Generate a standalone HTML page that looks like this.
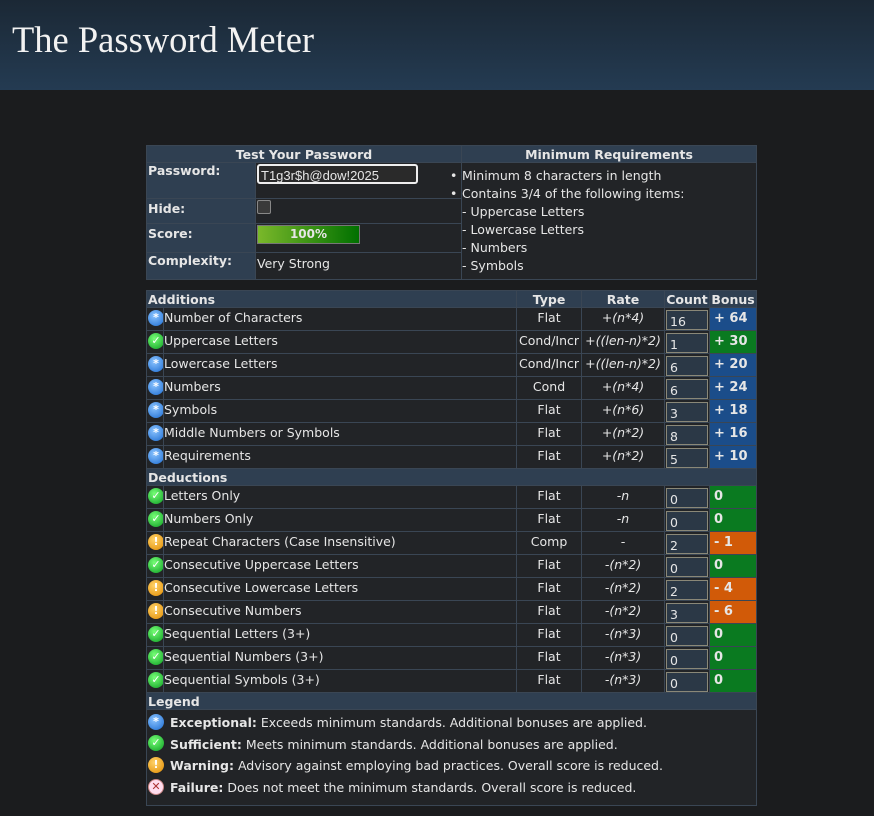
<!DOCTYPE html>
<html><head><meta charset="utf-8"><style>
body{margin:0;background:#1b1c1e;width:874px;height:816px;overflow:hidden;font-family:"DejaVu Sans","Liberation Sans",sans-serif;font-size:12.5px;color:#e6e6e6}
#hdr{height:90px;background:linear-gradient(#1b2835,#243b52);position:relative}
#hdr h1{margin:0;position:absolute;left:12px;top:18px;font-family:"Liberation Serif",serif;font-weight:normal;font-size:36.5px;color:#f2f2f2}
table{border-collapse:collapse;table-layout:fixed;position:absolute;left:146px}
td,th{border:1px solid #3a4654;padding:0 1px;overflow:hidden;white-space:nowrap}
th{background:#2f3f51;font-weight:bold;font-size:12.5px}
td{background:#222427}
.g td{vertical-align:top;padding-top:2px}
.g td.ii{padding:2px 0 0 0}
.g td.ii .ic{display:block;margin:0 0 0 1px}
.g td.nm{padding-left:0}
.lab{background:#2f3f51;font-weight:bold;vertical-align:top}
.c{text-align:center}.i{font-style:italic}
.g td.cnt{padding:2px 0 0 0}
.box{width:42px;height:20px;margin:0 0 0 1px;background:#2b3846;border:1px solid #8a8878;box-sizing:border-box;padding:3px 0 0 3px;font-size:12.5px}
.g td.b{font-weight:bold;font-size:13px;padding:3px 0 0 4px}
.bl{background:#1b4d8a !important}.gr{background:#0a7a20 !important}.or{background:#d15a08 !important}
.ic{display:inline-block;width:16px;height:16px;border-radius:50%;text-align:center;font-size:11px;line-height:16px;color:#fff;font-weight:bold}
.x{background:radial-gradient(circle at 40% 35%,#8bc4ff,#1a6ad0)}
.s{background:radial-gradient(circle at 40% 35%,#7f7,#0a9a20)}
.w{background:radial-gradient(circle at 40% 35%,#ffd36a,#e08a00)}
.f{background:#fde;color:#a33;border:1px solid #c88;box-sizing:border-box;line-height:14px}
.sec th{text-align:left}
.sec th.c{text-align:center}
.lg div{height:21.7px;line-height:21.7px}
.lg .ic{vertical-align:middle;position:relative;top:-2px;margin-right:2px}
</style></head><body>
<div id="hdr"><h1>The Password Meter</h1></div>

<table style="top:145px;width:610px">
<col style="width:109px"><col style="width:206px"><col style="width:295px">
<tr style="height:17px"><th colspan="2">Test Your Password</th><th>Minimum Requirements</th></tr>
<tr style="height:36px"><td class="lab">Password:</td><td style="vertical-align:top;padding-top:1px"><div style="width:161px;height:20px;border:2px solid #eee;border-radius:3px;background:#2a2a2a;box-sizing:border-box;font-family:'Liberation Sans',sans-serif;font-size:13px;padding:2px 0 0 2px">T1g3r$h@dow!2025</div></td>
<td rowspan="4" style="vertical-align:top;padding:4px 0 0 0;line-height:18px;overflow:visible">
<div style="position:relative"><span style="position:absolute;left:-12px">•</span>Minimum 8 characters in length</div>
<div style="position:relative"><span style="position:absolute;left:-12px">•</span>Contains 3/4 of the following items:</div>
<div>- Uppercase Letters</div><div>- Lowercase Letters</div><div>- Numbers</div><div>- Symbols</div></td></tr>
<tr style="height:25px"><td class="lab" style="padding-top:2px">Hide:</td><td style="vertical-align:top"><div style="width:12px;height:12px;border:1px solid #888;border-radius:2px;background:#3a3a3a;margin-top:1px"></div></td></tr>
<tr style="height:29px"><td class="lab" style="padding-top:2px">Score:</td><td style="vertical-align:top"><div style="width:101px;height:17px;border:1px solid #777;background:linear-gradient(90deg,#7ab82a,#007000);text-align:center;font-weight:bold;font-size:12px;line-height:17px;margin-top:1px">100%</div></td></tr>
<tr style="height:27px"><td class="lab">Complexity:</td><td style="vertical-align:top;padding-top:3px">Very Strong</td></tr>
</table>

<table class="g" style="top:290px;width:610px">
<col style="width:17px"><col style="width:353px"><col style="width:65px"><col style="width:83px"><col style="width:45px"><col style="width:47px">
<tr style="height:17px" class="sec"><th colspan="2">Additions</th><th class="c">Type</th><th class="c">Rate</th><th class="c">Count</th><th class="c">Bonus</th></tr>
<tr style="height:23px"><td class="ii"><span class="ic x">*</span></td><td class="nm">Number of Characters</td><td class="c">Flat</td><td class="c i">+(n*4)</td><td class="cnt"><div class="box">16</div></td><td class="b bl">+ 64</td></tr>
<tr style="height:23px"><td class="ii"><span class="ic s">✓</span></td><td class="nm">Uppercase Letters</td><td class="c">Cond/Incr</td><td class="c i">+((len-n)*2)</td><td class="cnt"><div class="box">1</div></td><td class="b gr">+ 30</td></tr>
<tr style="height:23px"><td class="ii"><span class="ic x">*</span></td><td class="nm">Lowercase Letters</td><td class="c">Cond/Incr</td><td class="c i">+((len-n)*2)</td><td class="cnt"><div class="box">6</div></td><td class="b bl">+ 20</td></tr>
<tr style="height:23px"><td class="ii"><span class="ic x">*</span></td><td class="nm">Numbers</td><td class="c">Cond</td><td class="c i">+(n*4)</td><td class="cnt"><div class="box">6</div></td><td class="b bl">+ 24</td></tr>
<tr style="height:23px"><td class="ii"><span class="ic x">*</span></td><td class="nm">Symbols</td><td class="c">Flat</td><td class="c i">+(n*6)</td><td class="cnt"><div class="box">3</div></td><td class="b bl">+ 18</td></tr>
<tr style="height:23px"><td class="ii"><span class="ic x">*</span></td><td class="nm">Middle Numbers or Symbols</td><td class="c">Flat</td><td class="c i">+(n*2)</td><td class="cnt"><div class="box">8</div></td><td class="b bl">+ 16</td></tr>
<tr style="height:23px"><td class="ii"><span class="ic x">*</span></td><td class="nm">Requirements</td><td class="c">Flat</td><td class="c i">+(n*2)</td><td class="cnt"><div class="box">5</div></td><td class="b bl">+ 10</td></tr>
<tr style="height:17px" class="sec"><th colspan="6">Deductions</th></tr>
<tr style="height:23px"><td class="ii"><span class="ic s">✓</span></td><td class="nm">Letters Only</td><td class="c">Flat</td><td class="c i">-n</td><td class="cnt"><div class="box">0</div></td><td class="b gr">0</td></tr>
<tr style="height:23px"><td class="ii"><span class="ic s">✓</span></td><td class="nm">Numbers Only</td><td class="c">Flat</td><td class="c i">-n</td><td class="cnt"><div class="box">0</div></td><td class="b gr">0</td></tr>
<tr style="height:23px"><td class="ii"><span class="ic w">!</span></td><td class="nm">Repeat Characters (Case Insensitive)</td><td class="c">Comp</td><td class="c i">-</td><td class="cnt"><div class="box">2</div></td><td class="b or">- 1</td></tr>
<tr style="height:23px"><td class="ii"><span class="ic s">✓</span></td><td class="nm">Consecutive Uppercase Letters</td><td class="c">Flat</td><td class="c i">-(n*2)</td><td class="cnt"><div class="box">0</div></td><td class="b gr">0</td></tr>
<tr style="height:23px"><td class="ii"><span class="ic w">!</span></td><td class="nm">Consecutive Lowercase Letters</td><td class="c">Flat</td><td class="c i">-(n*2)</td><td class="cnt"><div class="box">2</div></td><td class="b or">- 4</td></tr>
<tr style="height:23px"><td class="ii"><span class="ic w">!</span></td><td class="nm">Consecutive Numbers</td><td class="c">Flat</td><td class="c i">-(n*2)</td><td class="cnt"><div class="box">3</div></td><td class="b or">- 6</td></tr>
<tr style="height:23px"><td class="ii"><span class="ic s">✓</span></td><td class="nm">Sequential Letters (3+)</td><td class="c">Flat</td><td class="c i">-(n*3)</td><td class="cnt"><div class="box">0</div></td><td class="b gr">0</td></tr>
<tr style="height:23px"><td class="ii"><span class="ic s">✓</span></td><td class="nm">Sequential Numbers (3+)</td><td class="c">Flat</td><td class="c i">-(n*3)</td><td class="cnt"><div class="box">0</div></td><td class="b gr">0</td></tr>
<tr style="height:23px"><td class="ii"><span class="ic s">✓</span></td><td class="nm">Sequential Symbols (3+)</td><td class="c">Flat</td><td class="c i">-(n*3)</td><td class="cnt"><div class="box">0</div></td><td class="b gr">0</td></tr>
<tr style="height:17px" class="sec"><th colspan="6">Legend</th></tr>
<tr style="height:96px"><td colspan="6" class="lg" style="vertical-align:top;padding:2px 0 0 1px">
<div><span class="ic x">*</span> <b>Exceptional:</b> Exceeds minimum standards. Additional bonuses are applied.</div>
<div><span class="ic s">✓</span> <b>Sufficient:</b> Meets minimum standards. Additional bonuses are applied.</div>
<div><span class="ic w">!</span> <b>Warning:</b> Advisory against employing bad practices. Overall score is reduced.</div>
<div><span class="ic f">✕</span> <b>Failure:</b> Does not meet the minimum standards. Overall score is reduced.</div>
</td></tr>
</table>
</body></html>
